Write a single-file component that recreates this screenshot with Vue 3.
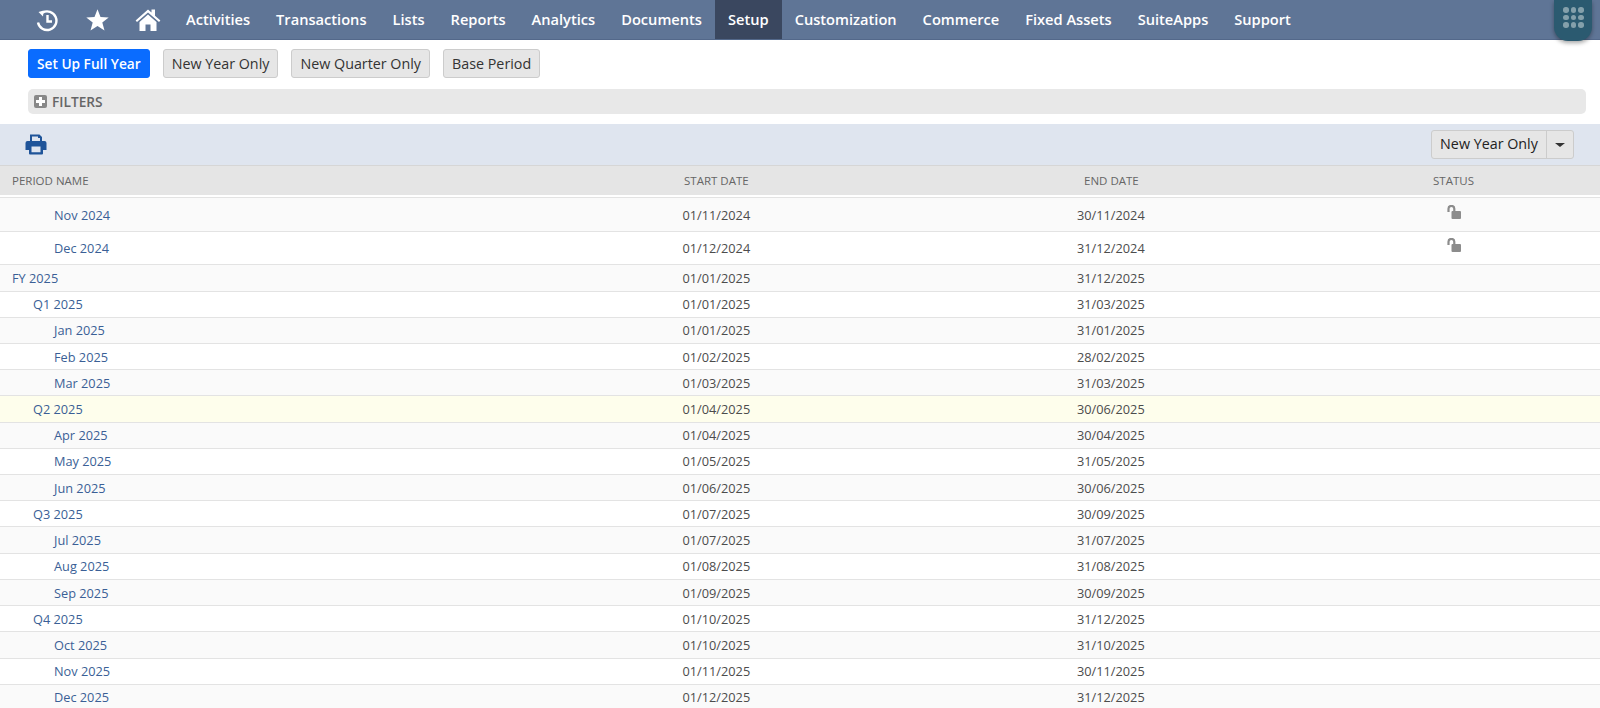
<template>
  <div class="page">
    <header class="nav">
      <div class="nav-icons">
        <svg class="ico" width="24" height="24" viewBox="0 0 24 24" fill="none" stroke="#fff" stroke-width="2.4">
          <path d="M7.5 4.6 A9.3 9.3 0 1 1 3 14.5" />
          <path d="M12.5 7 V13.5 H17" />
          <path d="M3.5 4 L8.6 2.6 L8 8.4 Z" fill="#fff" stroke="none" />
        </svg>
        <svg class="ico star" width="25" height="24" viewBox="0 0 24 24" fill="#fff">
          <path d="M12 1.2 L15 9 L23.2 9.4 L16.8 14.6 L19 22.6 L12 18.1 L5 22.6 L7.2 14.6 L0.8 9.4 L9 9 Z" />
        </svg>
        <svg class="ico home" width="26" height="24" viewBox="0 0 26 24" fill="#fff">
          <path d="M0.6 12.6 L13 1.5 L16.5 4.6 V1.5 H20 V7.8 L25.4 12.6 L24 14 L13 4.4 L2 14 Z" />
          <path d="M4.5 14 L13 6.6 L21.5 14 V23 H15.5 V16.5 H10.5 V23 H4.5 Z" />
        </svg>
      </div>
      <a v-for="item in navItems" :key="item" class="nav-item" :class="{ active: item === 'Setup' }">{{ item }}</a>
      <div class="grid-btn">
        <i v-for="n in 9" :key="n"></i>
      </div>
    </header>

    <div class="actions">
      <button class="btn primary">Set Up Full Year</button>
      <button class="btn">New Year Only</button>
      <button class="btn">New Quarter Only</button>
      <button class="btn">Base Period</button>
    </div>

    <div class="filters">
      <span class="plus"></span>
      <span>FILTERS</span>
    </div>

    <div class="toolbar">
      <svg width="22" height="21" viewBox="0 0 22 21" fill="#1f5499">
        <path d="M5 0.5 H14.5 L17 3 V8 H15 V4 H13 V2.5 H7 V8 H5 Z" />
        <path d="M2.5 7 H19.5 A2 2 0 0 1 21.5 9 V16 H18 V19.5 A1 1 0 0 1 17 20.5 H5 A1 1 0 0 1 4 19.5 V16 H0.5 V9 A2 2 0 0 1 2.5 7 Z M6.5 12.5 V18.3 H15.5 V12.5 Z" />
      </svg>
      <div class="split">
        <span class="split-main">New Year Only</span>
        <span class="split-arrow"></span>
      </div>
    </div>

    <div class="row head">
      <span class="name">PERIOD NAME</span>
      <span class="nudge">START DATE</span>
      <span>END DATE</span>
      <span>STATUS</span>
    </div>

    <div class="table">
      <div
        v-for="(r, i) in rows"
        :key="i"
        class="row"
        :class="{ alt: i % 2 === 0, tall: r.locked, hl: r.name === 'Q2 2025' }"
      >
        <a class="name" :class="'lv' + r.level">{{ r.name }}</a>
        <span class="start">{{ r.start }}</span>
        <span class="end">{{ r.end }}</span>
        <span>
          <svg v-if="r.locked" class="lock" width="15" height="15" viewBox="0 0 15 15" fill="#8c8c8c">
            <path d="M1.5 7 V3.8 A2.9 2.9 0 0 1 7.3 3.8 V6" fill="none" stroke="#8c8c8c" stroke-width="2.2" />
            <rect x="4.5" y="6" width="9.5" height="8" rx="1" />
          </svg>
        </span>
      </div>
    </div>
  </div>
</template>

<script setup>
const navItems = [
  'Activities', 'Transactions', 'Lists', 'Reports', 'Analytics', 'Documents',
  'Setup', 'Customization', 'Commerce', 'Fixed Assets', 'SuiteApps', 'Support'
]

const rows = [
  { name: 'Nov 2024', level: 2, start: '01/11/2024', end: '30/11/2024', locked: true },
  { name: 'Dec 2024', level: 2, start: '01/12/2024', end: '31/12/2024', locked: true },
  { name: 'FY 2025', level: 0, start: '01/01/2025', end: '31/12/2025' },
  { name: 'Q1 2025', level: 1, start: '01/01/2025', end: '31/03/2025' },
  { name: 'Jan 2025', level: 2, start: '01/01/2025', end: '31/01/2025' },
  { name: 'Feb 2025', level: 2, start: '01/02/2025', end: '28/02/2025' },
  { name: 'Mar 2025', level: 2, start: '01/03/2025', end: '31/03/2025' },
  { name: 'Q2 2025', level: 1, start: '01/04/2025', end: '30/06/2025' },
  { name: 'Apr 2025', level: 2, start: '01/04/2025', end: '30/04/2025' },
  { name: 'May 2025', level: 2, start: '01/05/2025', end: '31/05/2025' },
  { name: 'Jun 2025', level: 2, start: '01/06/2025', end: '30/06/2025' },
  { name: 'Q3 2025', level: 1, start: '01/07/2025', end: '30/09/2025' },
  { name: 'Jul 2025', level: 2, start: '01/07/2025', end: '31/07/2025' },
  { name: 'Aug 2025', level: 2, start: '01/08/2025', end: '31/08/2025' },
  { name: 'Sep 2025', level: 2, start: '01/09/2025', end: '30/09/2025' },
  { name: 'Q4 2025', level: 1, start: '01/10/2025', end: '31/12/2025' },
  { name: 'Oct 2025', level: 2, start: '01/10/2025', end: '31/10/2025' },
  { name: 'Nov 2025', level: 2, start: '01/11/2025', end: '30/11/2025' },
  { name: 'Dec 2025', level: 2, start: '01/12/2025', end: '31/12/2025' }
]
</script>

<style>
html, body {
  margin: 0;
  overflow: hidden;
  background: #fff;
}
</style>

<style scoped>
.page {
  height: 708px;
  overflow: hidden;
  font-family: "Open Sans", sans-serif;
  font-size: 12.75px;
  color: #444;
}

.nav {
  position: relative;
  display: flex;
  height: 40px;
  box-sizing: border-box;
  background: #5f7596;
  border-bottom: 1px solid #53688a;
}

.nav-icons {
  display: flex;
  align-items: center;
  width: 173px;
  flex: none;
}

.ico { flex: none; }
.nav-icons .ico:nth-child(1) { margin-left: 35px; }
.nav-icons .ico:nth-child(2) { margin-left: 26px; }
.nav-icons .ico:nth-child(3) { margin-left: 25px; }

.nav-item {
  padding: 0 13px;
  line-height: 39px;
  font-size: 14.64px;
  font-weight: 600;
  color: #fff;
}

.nav-item.active {
  background: #3a475f;
}

.grid-btn {
  position: absolute;
  right: 8px;
  top: 0;
  width: 38px;
  height: 41px;
  box-sizing: border-box;
  padding: 7px 0 0 9px;
  display: grid;
  grid-template-columns: repeat(3, 5.5px);
  grid-auto-rows: 5.5px;
  gap: 2.2px;
  background: #2b5a70;
  border-radius: 0 0 14px 14px;
  box-shadow: 0 2px 4px rgba(0, 0, 0, 0.35);
}

.grid-btn i {
  border-radius: 50%;
  background: #84a0ab;
}

.actions {
  display: flex;
  gap: 13px;
  padding: 9px 0 0 28px;
}

.btn {
  height: 29px;
  padding: 0 8px;
  border: 1px solid #ccc;
  border-radius: 3px;
  background: #e6e6e6;
  font-family: inherit;
  font-size: 14.3px;
  font-weight: 500;
  color: #333;
}

.btn.primary {
  background: #0a6cff;
  border-color: #0a6cff;
  color: #fff;
  font-weight: 600;
  font-size: 13.7px;
}

.filters {
  display: flex;
  align-items: center;
  gap: 5px;
  height: 25px;
  margin: 11px 14px 0 28px;
  padding-left: 6px;
  border-radius: 5px;
  background: #e8e8e8;
  font-size: 13.7px;
  font-weight: 600;
  color: #666;
}

.plus {
  position: relative;
  width: 13px;
  height: 13px;
  border-radius: 2px;
  background: #888;
}

.plus::before,
.plus::after {
  content: "";
  position: absolute;
  background: #fff;
}

.plus::before { left: 2px; right: 2px; top: 5px; height: 3px; }
.plus::after { top: 2px; bottom: 2px; left: 5px; width: 3px; }

.toolbar {
  display: flex;
  align-items: center;
  justify-content: space-between;
  height: 41px;
  margin-top: 10px;
  padding: 0 26px 0 25px;
  background: #dfe5ef;
}

.split {
  display: flex;
  height: 29px;
  line-height: 26px;
  box-sizing: border-box;
  border: 1px solid #ccc;
  border-radius: 3px;
  background: #e6e6e6;
  font-size: 14.3px;
  font-weight: 500;
  color: #222;
}

.split-main {
  width: 114px;
  text-align: center;
  border-right: 1px solid #ccc;
}

.split-arrow {
  position: relative;
  width: 26px;
}

.split-arrow::after {
  content: "";
  position: absolute;
  left: 8px;
  top: 12px;
  border: 5px solid transparent;
  border-top: 4px solid #333;
  border-bottom: 0;
}

.row {
  display: grid;
  grid-template-columns: 683px 401px 349px 167px;
  align-items: center;
  height: 26.23px;
  box-sizing: border-box;
  border-bottom: 1px solid #e3e3e3;
  background: #fff;
  color: #4c4c4c;
}

.row.alt { background: #fafafa; }
.row.tall { height: 33.65px; padding-top: 1px; }
.row.hl { background: #fefeec; }

.row.head {
  height: 30px;
  border-top: 1px solid #d6d6d6;
  border-bottom: 0;
  background: #e5e5e5;
  font-size: 11.5px;
  color: #666;
}

.nudge { padding-left: 1px; }
.start { margin-left: -0.5px; }
.end { margin-left: -7px; }

.table {
  margin-top: 2px;
  border-top: 1px solid #e3e3e3;
}

.name { padding-left: 12px; }
.lv1 { padding-left: 33px; }
.lv2 { padding-left: 54px; }
a.name { color: #3a5f96; }

.lock {
  display: block;
  margin: -5px 0 0 14px;
}
</style>
